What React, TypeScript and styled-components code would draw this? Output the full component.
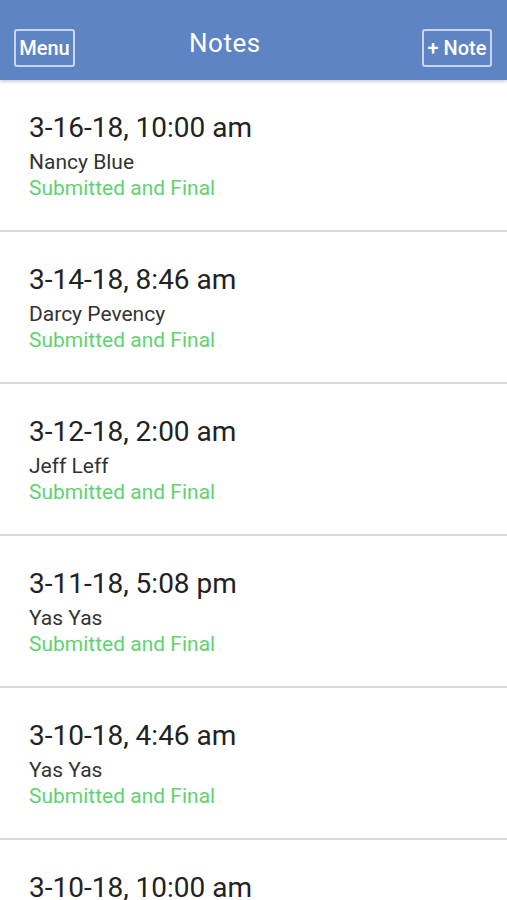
import React from "react";
import styled, { createGlobalStyle } from "styled-components";

const Global = createGlobalStyle`
  html, body { margin: 0; padding: 0; background: #ffffff; }
  body { font-family: Roboto, "Noto Sans", sans-serif; }
  * { box-sizing: border-box; }
`;

const Page = styled.div`
  width: 507px;
  height: 900px;
  background: #ffffff;
  overflow: hidden;
`;

const Header = styled.header`
  height: 80px;
  background: #5f84c4;
  display: flex;
  align-items: center;
  padding: 0 15px 0 14px;
  position: relative;
  box-shadow: 0 2px 3px rgba(0, 0, 0, 0.18);
  z-index: 1;
`;

const HeaderButton = styled.button<{ $w: number }>`
  width: ${(p) => p.$w}px;
  height: 38px;
  padding: 0;
  margin-top: 16px;
  border: 2px solid #c9d6ee;
  border-radius: 3px;
  background: transparent;
  color: #ffffff;
  font-family: Roboto, sans-serif;
  font-size: 20px;
  font-weight: 500;
  line-height: 20px;
  display: flex;
  align-items: center;
  justify-content: center;
  white-space: nowrap;
`;

const Title = styled.h1`
  margin: 5px 0 0 0;
  font-family: Roboto, sans-serif;
  font-weight: 400;
  font-size: 26px;
  line-height: 30px;
  letter-spacing: 0.5px;
  color: #ffffff;
  flex: 1;
  text-align: left;
  padding-left: 114px;
`;

const List = styled.div`
  display: flex;
  flex-direction: column;
`;

const Row = styled.div`
  height: 152px;
  flex-shrink: 0;
  padding: 32px 29px 0 29px;
  border-bottom: 2px solid #d9d9d9;
  display: flex;
  flex-direction: column;
`;

const DateText = styled.div`
  font-size: 28px;
  color: #222222;
  line-height: 32px;
  white-space: nowrap;
`;

const Name = styled.div`
  font-size: 21px;
  color: #333333;
  line-height: 26px;
  margin-top: 5px;
`;

const Status = styled.div`
  font-size: 21px;
  color: #5fd36f;
  line-height: 27px;
`;

const notes = [
  { date: "3-16-18, 10:00 am", name: "Nancy Blue" },
  { date: "3-14-18, 8:46 am", name: "Darcy Pevency" },
  { date: "3-12-18, 2:00 am", name: "Jeff Leff" },
  { date: "3-11-18, 5:08 pm", name: "Yas Yas" },
  { date: "3-10-18, 4:46 am", name: "Yas Yas" },
  { date: "3-10-18, 10:00 am", name: "Yas Yas" },
];

export default function App() {
  return (
    <Page>
      <Global />
      <Header>
        <HeaderButton $w={61}>Menu</HeaderButton>
        <Title>Notes</Title>
        <HeaderButton $w={70}>+ Note</HeaderButton>
      </Header>
      <List>
        {notes.map((n, i) => (
          <Row key={i}>
            <DateText>{n.date}</DateText>
            <Name>{n.name}</Name>
            <Status>Submitted and Final</Status>
          </Row>
        ))}
      </List>
    </Page>
  );
}
